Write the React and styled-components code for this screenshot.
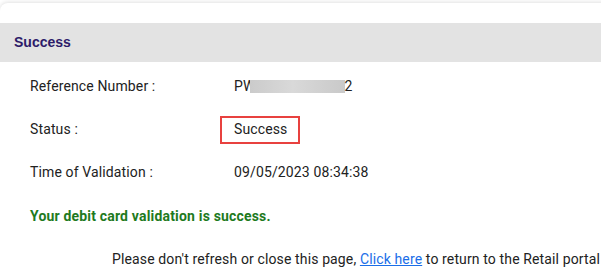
import React from 'react';
import styled, { createGlobalStyle } from 'styled-components';

const GlobalStyle = createGlobalStyle`
  html, body {
    margin: 0;
    padding: 0;
    background: #ffffff;
    overflow: hidden;
  }
  body {
    font-family: Roboto, "Liberation Sans", Arial, sans-serif;
  }
`;

const Card = styled.div`
  margin-top: 3px;
  margin-right: -20px;
  background: #ffffff;
  border-radius: 8px 8px 0 0;
  box-shadow: 0 -1px 4px rgba(0, 0, 0, 0.12);
  padding-top: 20px;
  height: 255px;
  overflow: hidden;
`;

const Header = styled.div`
  height: 39px;
  line-height: 39px;
  background: #e3e3e3;
  padding-left: 14px;
  font-family: "Liberation Sans", Arial, sans-serif;
  font-weight: bold;
  font-size: 14px;
  color: #2d1b69;
`;

const Details = styled.div`
  display: flex;
  flex-direction: column;
  gap: 23px;
  padding: 14px 0 0 30px;
`;

const Row = styled.div`
  display: flex;
  font-size: 14px;
  line-height: 20px;
  letter-spacing: 0.13px;
  color: #222222;
`;

const Label = styled.div`
  width: 204px;
`;

const Value = styled.div`
  display: flex;
  align-items: center;
`;

const Redacted = styled.span`
  display: inline-block;
  width: 95px;
  height: 13px;
  margin-left: -6px;
  background: linear-gradient(90deg, #cbcbcb, #d9d9d9 45%, #c9c9c9);
`;

const Highlight = styled.span`
  position: relative;
  &::after {
    content: '';
    position: absolute;
    top: -3px;
    bottom: -5px;
    left: -14px;
    right: -13px;
    border: 2px solid #e8413f;
  }
`;

const Message = styled.div`
  margin-top: 1px;
  font-size: 14px;
  line-height: 20px;
  letter-spacing: 0.18px;
  font-weight: bold;
  color: #1e7a1e;
`;

const Footer = styled.div`
  padding: 23px 0 0 112px;
  font-size: 14px;
  line-height: 20px;
  letter-spacing: 0.13px;
  color: #222222;
  white-space: nowrap;
`;

const Link = styled.a`
  color: #1a6ee8;
  text-decoration: underline;
`;

export default function App() {
  return (
    <>
      <GlobalStyle />
      <Card>
        <Header>Success</Header>
        <Details>
          <Row>
            <Label>Reference Number :</Label>
            <Value>PW<Redacted />2</Value>
          </Row>
          <Row>
            <Label>Status :</Label>
            <Value><Highlight>Success</Highlight></Value>
          </Row>
          <Row>
            <Label>Time of Validation :</Label>
            <Value>09/05/2023 08:34:38</Value>
          </Row>
          <Message>Your debit card validation is success.</Message>
        </Details>
        <Footer>
          Please don't refresh or close this page, <Link href="#">Click here</Link> to return to the Retail portal
        </Footer>
      </Card>
    </>
  );
}
